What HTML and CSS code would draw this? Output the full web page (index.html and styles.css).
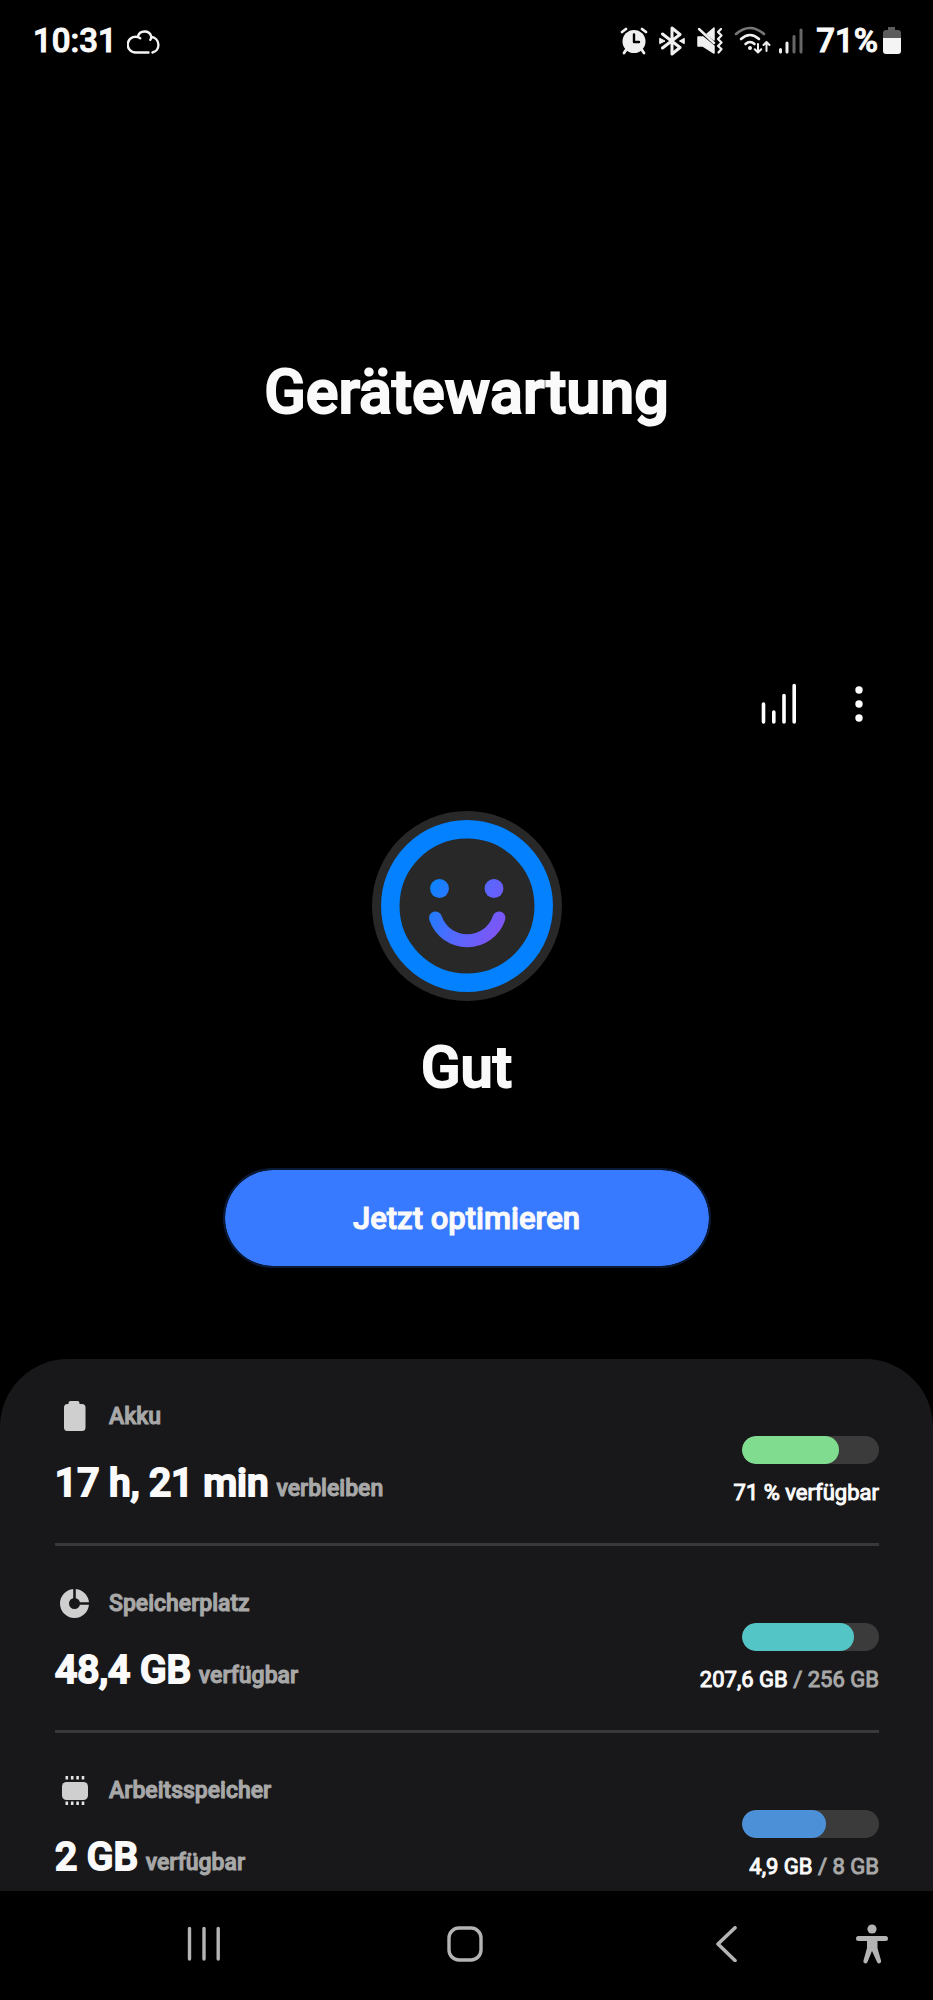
FILE: index.html
```html
<!DOCTYPE html>
<html lang="de">
<head>
<meta charset="utf-8">
<meta name="viewport" content="width=device-width, initial-scale=1">
<title>Gerätewartung</title>
<link rel="stylesheet" href="styles.css">
</head>
<body>
<div class="screen">
  <header class="status">
    <div class="status-side">
      <span class="status-text">10:31</span>
      <svg class="status-cloud" width="36" height="28" viewBox="0 0 36 28" fill="none" stroke="#f4f4f4" stroke-width="2.4" stroke-linecap="round"><path d="M21.500 25.500H9.500A7.900 7.900 0 1 1 13.200 11.200M10.800 9.800A7 7 0 0 1 24.300 9.600Q24.500 11 23.300 12.800M24.300 10A7.900 7.900 0 0 1 25.500 25.500"/></svg>
    </div>
    <div class="status-side status-right">
      <svg class="status-icons" width="186" height="30" viewBox="0 0 186 30" fill="none" stroke="#f0f0f0" stroke-linecap="round" stroke-linejoin="round">
        <g>
          <circle cx="14" cy="15.500" r="11.500" fill="#f0f0f0" stroke="none"/>
          <path d="M2 6L6 3M26 6L22 3M6 24L4 27M22 24L24 27" stroke-width="2.800"/>
          <path d="M14 8.500V16H19" stroke="#000" stroke-width="2.400"/>
        </g>
        <g>
          <path d="M42.500 8L60 21.500L52 28V2L60 8.500L42.500 22" stroke-width="3"/>
          <path d="M40 12.500L45 15L40 17.500ZM64 12.500L59.500 15L64 17.500Z" fill="#f0f0f0" stroke-width="1"/>
        </g>
        <g>
          <path d="M78 11H83L94 20V27L83 20H78ZM87 8L94 2V14Z" fill="#f0f0f0" stroke-width="1.500"/>
          <path d="M79 3L94 17" stroke-width="2.400"/>
          <path d="M101 3L98 6L101.500 9.500L98 13L101.500 16.500L98 20L101.500 23L98.500 26.500" stroke-width="2.300"/>
        </g>
        <g stroke-width="2.600">
          <path d="M116 8Q130-4 144 8" stroke="#777"/>
          <path d="M121 13Q130 5 139 13M125.500 18Q130 14 134.500 18"/>
          <circle cx="130" cy="22" r="2" fill="#f0f0f0" stroke="none"/>
          <path d="M138 18V26M134.800 23.200L138 26.500L141.200 23.200M146.500 25V17M143.500 19L146.500 16L149.500 19" stroke-width="2"/>
        </g>
        <g stroke-width="3">
          <path d="M160.500 23.500V26M167 17V26"/>
          <path d="M174 10.500V26M181 4V26" stroke="#666"/>
        </g>
      </svg>
      <span class="status-text">71%</span>
      <svg class="status-battery" width="20" height="28" viewBox="0 0 20 28"><path d="M6 0H13V3H16Q19 3 19 6V11H1V6Q1 3 4 3H6Z" fill="#5c5c5c"/><path d="M1 11H19V24Q19 27 16 27H4Q1 27 1 24Z" fill="#f4f4f4"/></svg>
    </div>
  </header>

  <main class="main">
    <h1 class="title">Gerätewartung</h1>

    <div class="toolbar">
      <button class="tool" type="button" aria-label="Statistik">
        <svg width="36" height="42" viewBox="0 0 36 42" stroke="#fff" stroke-width="3.600" stroke-linecap="round"><path d="M2.500 21V39M12.800 29V39M23 12.500V39M33.200 2.500V39"/></svg>
      </button>
      <button class="tool" type="button" aria-label="Weitere Optionen">
        <svg width="8" height="36" viewBox="0 0 8 36" fill="#fff"><circle cx="4" cy="4" r="3.700"/><circle cx="4" cy="18" r="3.700"/><circle cx="4" cy="32" r="3.700"/></svg>
      </button>
    </div>

    <section class="health">
      <svg width="192" height="192" viewBox="0 0 192 192" fill="none">
        <defs><linearGradient id="smile" gradientUnits="userSpaceOnUse" x1="62" y1="72" x2="134" y2="112"><stop offset="0" stop-color="#0a84ff"/><stop offset=".5" stop-color="#4f6bff"/><stop offset="1" stop-color="#7f55f5"/></linearGradient></defs>
        <circle cx="96" cy="96" r="95" fill="#282828"/>
        <circle cx="96" cy="96" r="76.700" stroke="#0381fe" stroke-width="18.500"/>
        <circle cx="68.500" cy="78.500" r="9.400" fill="url(#smile)"/>
        <circle cx="123" cy="78.500" r="9.400" fill="url(#smile)"/>
        <path d="M64.500 108A33.500 33.500 0 0 0 128 108" stroke="url(#smile)" stroke-width="13" stroke-linecap="round"/>
      </svg>
      <h2 class="grade">Gut</h2>
      <button class="optimize" type="button">Jetzt optimieren</button>
    </section>

    <section class="sheet">
      <article class="row">
        <div class="info">
          <h3 class="label"><svg class="label-icon" width="40" height="32" viewBox="1 0 40 32" fill="#cfcfcf"><path d="M16.500 0H23.500Q25.500 0 25.500 2V3H28Q31.500 3 31.500 6.500V26.500Q31.500 30 28 30H13.500Q10 30 10 26.500V6.500Q10 3 13.500 3H14.500V2Q14.500 0 16.500 0Z"/></svg>Akku</h3>
          <p class="value">17 h, 21 min <span class="unit">verbleiben</span></p>
        </div>
        <div class="usage">
          <progress class="bar bar-green" max="100" value="71" aria-label="Akku"></progress>
          <p class="caption">71 % verfügbar</p>
        </div>
      </article>
      <article class="row">
        <div class="info">
          <h3 class="label"><svg class="label-icon" width="40" height="32" viewBox="1 0 40 32"><circle cx="20.500" cy="15.500" r="10" fill="none" stroke="#cfcfcf" stroke-width="9"/><path d="M20.500 0V15.500H36" fill="none" stroke="#18181a" stroke-width="2.600"/></svg>Speicherplatz</h3>
          <p class="value">48,4 GB <span class="unit">verfügbar</span></p>
        </div>
        <div class="usage">
          <progress class="bar bar-teal" max="100" value="82" aria-label="Speicherplatz"></progress>
          <p class="caption">207,6 GB <span class="muted">/ 256 GB</span></p>
        </div>
      </article>
      <article class="row">
        <div class="info">
          <h3 class="label"><svg class="label-icon" width="40" height="32" viewBox="1 0 40 32" fill="#cfcfcf"><rect x="8" y="7" width="26" height="18" rx="4.500"/><path d="M12.800 1V4.500M18.200 1V4.500M23.600 1V4.500M29 1V4.500M12.800 26.500V30M18.200 26.500V30M23.600 26.500V30M29 26.500V30" stroke="#e4e4e4" stroke-width="2.600"/></svg>Arbeitsspeicher</h3>
          <p class="value">2 GB <span class="unit">verfügbar</span></p>
        </div>
        <div class="usage">
          <progress class="bar bar-blue" max="100" value="61" aria-label="Arbeitsspeicher"></progress>
          <p class="caption">4,9 GB <span class="muted">/ 8 GB</span></p>
        </div>
      </article>
    </section>
  </main>

  <nav class="nav" aria-label="Navigation">
    <button class="nav-key" type="button" aria-label="Letzte Apps"><svg width="36" height="36" viewBox="0 0 36 36" stroke="#b4b4b4" stroke-width="3.400" stroke-linecap="round"><path d="M3.500 2.500V33M18 2.500V33M32.200 2.500V33"/></svg></button>
    <button class="nav-key" type="button" aria-label="Startseite"><svg width="36" height="36" viewBox="0 0 36 36" fill="none" stroke="#b4b4b4" stroke-width="3.400"><rect x="2" y="2" width="32" height="32" rx="10"/></svg></button>
    <button class="nav-key" type="button" aria-label="Zurück"><svg width="36" height="36" viewBox="0 0 36 36" fill="none" stroke="#b4b4b4" stroke-width="3.600" stroke-linecap="round" stroke-linejoin="round"><path d="M27 1.800L10 18L27 34.500"/></svg></button>
    <button class="nav-key nav-access" type="button" aria-label="Bedienungshilfen"><svg width="32" height="40" viewBox="0 0 32 40" fill="#b4b4b4"><circle cx="16" cy="5" r="4.600"/><path d="M2.500 12H29.500A2.200 2.200 0 0 1 29.500 17H21.500V24L25 36.500A2 2 0 0 1 21 38L16 27L11.500 38A2 2 0 0 1 7.500 36.500L11 24V17H2.500A2.200 2.200 0 0 1 2.500 12Z"/></svg></button>
  </nav>
</div>
</body>
</html>
```
FILE: styles.css
```css
* {
  box-sizing: border-box;
}

body {
  margin: 0;
  background: #000;
  color: #fafafa;
  font-family: Roboto, "Liberation Sans", sans-serif;
  font-weight: 500;
}

h1, h2, h3, p {
  margin: 0;
  font-weight: 500;
}

button {
  padding: 0;
  border: 0;
  background: none;
  color: inherit;
  font: inherit;
}

svg {
  display: block;
  flex: none;
}

.screen {
  display: flex;
  flex-direction: column;
  min-height: 100vh;
}

.status {
  display: flex;
  justify-content: space-between;
  align-items: center;
  height: 82px;
  padding: 0 31px 0 33px;
}

.status-side {
  display: flex;
  align-items: center;
  gap: 10px;
}

.status-battery {
  margin-left: -6px;
}

.status-text {
  font-size: 33px;
  line-height: 40px;
  -webkit-text-stroke: 1px currentColor;
}

.main {
  display: flex;
  flex-direction: column;
  flex: 1;
}

.title {
  padding: 274px 24px 0;
  font-size: 61px;
  line-height: 72px;
  text-align: center;
  -webkit-text-stroke: 2px currentColor;
}

.toolbar {
  display: flex;
  justify-content: flex-end;
  align-items: center;
  gap: 46px;
  margin-top: 252px;
  padding: 0 58px;
}

.tool {
  display: grid;
  place-items: center;
  min-width: 32px;
  height: 48px;
}

.health {
  display: flex;
  flex-direction: column;
  align-items: center;
  padding: 82px 24px 91px;
}

.grade {
  margin-top: 29px;
  font-size: 58px;
  line-height: 72px;
  -webkit-text-stroke: 2px currentColor;
}

.optimize {
  width: 56%;
  min-width: 320px;
  max-width: 488px;
  height: 100px;
  margin-top: 65px;
  border: 2px solid #0a1a36;
  border-radius: 50px;
  background: #387aff;
  background-clip: padding-box;
  font-size: 31px;
  -webkit-text-stroke: 1px currentColor;
}

.sheet {
  flex: 1;
  padding: 0 54px 0 55px;
  border-radius: 68px 68px 0 0;
  background: #18181a;
}

.row {
  display: flex;
  justify-content: space-between;
  gap: 24px;
  padding: 42px 0 36px;
}

.row + .row {
  border-top: 3px solid #39393b;
}

.row:last-child {
  padding-bottom: 8px;
}

.label {
  display: flex;
  align-items: center;
  gap: 14px;
  color: #a8a8a8;
  font-size: 23px;
  line-height: 32px;
  -webkit-text-stroke: 1px currentColor;
}

.value {
  margin-top: 26px;
  font-size: 39px;
  line-height: 48px;
  -webkit-text-stroke: 2px currentColor;
}

.unit {
  margin-left: -2px;
  color: #a8a8a8;
  font-size: 23px;
  line-height: 24px;
  -webkit-text-stroke: 1px currentColor;
}

.usage {
  display: flex;
  flex-direction: column;
  align-items: flex-end;
  gap: 15px;
  padding-top: 35px;
}

.bar {
  display: block;
  width: 137px;
  height: 28px;
  appearance: none;
  border: 0;
  border-radius: 14px;
  background: #3b3b3b;
  overflow: hidden;
}

.bar::-webkit-progress-bar {
  background: #3b3b3b;
}

.bar::-webkit-progress-value {
  border-radius: 14px;
  background: currentColor;
}

.bar-green {
  color: #80dd90;
}

.bar-teal {
  color: #54c5c6;
}

.bar-blue {
  color: #4c91d8;
}

.caption {
  font-size: 22px;
  font-weight: 400;
  line-height: 28px;
  white-space: nowrap;
  -webkit-text-stroke: 1px currentColor;
}

.muted {
  color: #a8a8a8;
  -webkit-text-stroke: 1px currentColor;
}

.nav {
  display: grid;
  grid-template-columns: 261fr 261fr 261fr 77fr;
  align-items: center;
  height: 109px;
  padding: 0 0 4px 73px;
}

.nav-key {
  display: grid;
  place-items: center;
  height: 72px;
}

.nav-access {
  justify-self: start;
}
```
